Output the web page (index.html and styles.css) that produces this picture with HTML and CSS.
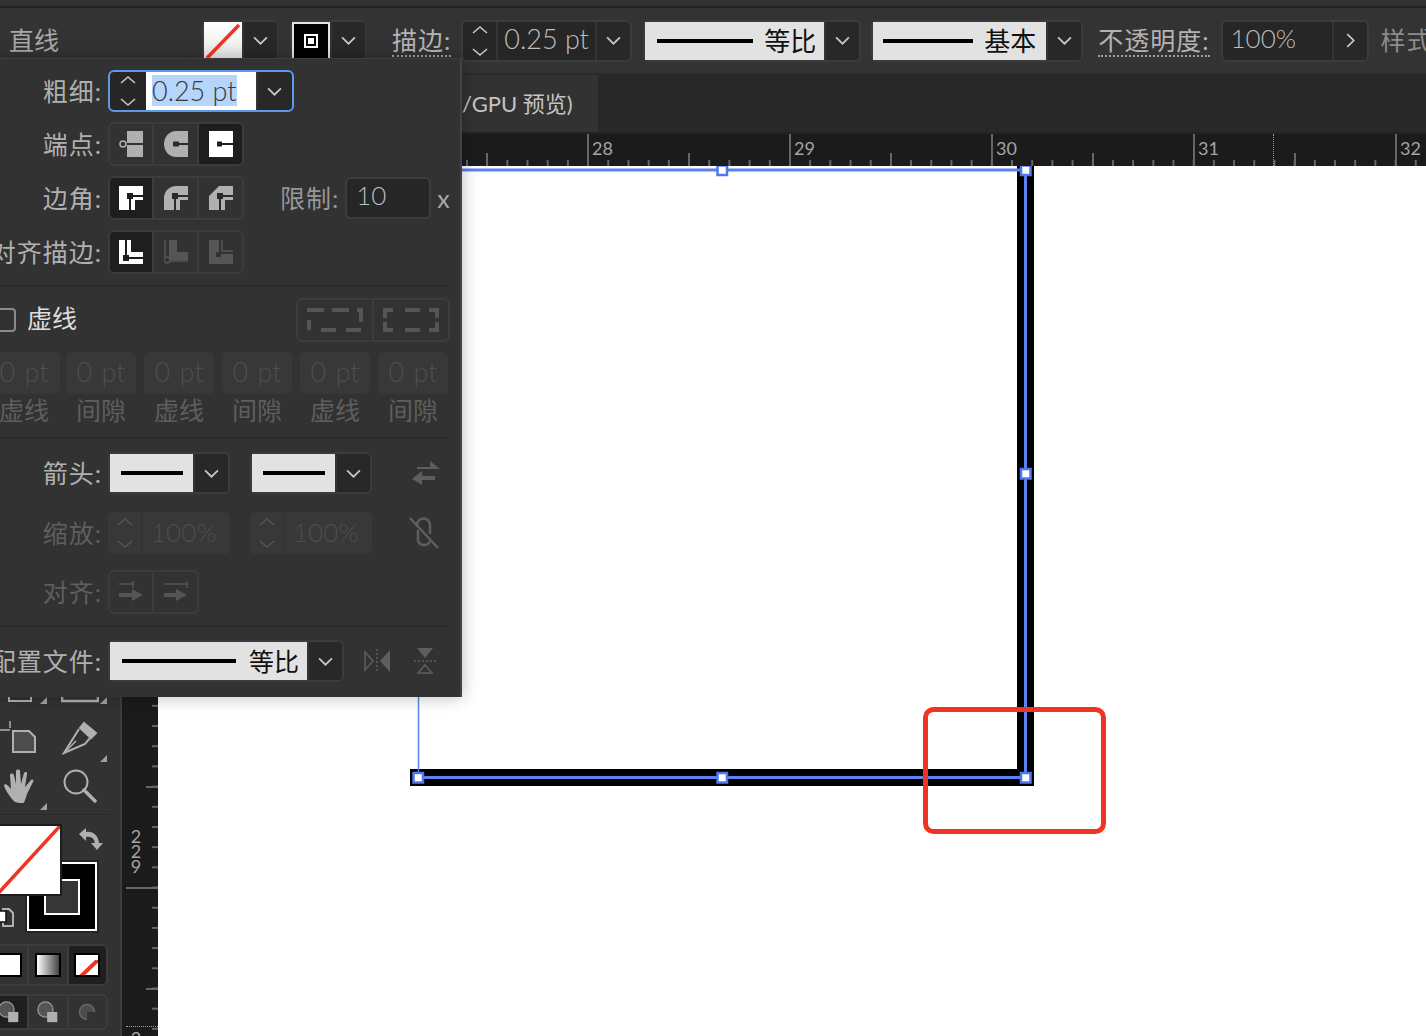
FILE: index.html
```html
<!DOCTYPE html>
<html lang="zh-CN">
<head>
    <meta charset="UTF-8">
    <title>直线 - 描边面板</title>
    <link rel="stylesheet" href="styles.css">
</head>
<body>

<svg class="sprite" xmlns="http://www.w3.org/2000/svg">
    <symbol id="chev" viewBox="0 0 14 8"><path d="M1 1l6 6 6-6" fill="none" stroke="currentColor" stroke-width="1.6"/></symbol>
    <symbol id="updown" viewBox="0 0 16 32"><path d="M1 8l7-6 7 6M1 24l7 6 7-6" fill="none" stroke="currentColor" stroke-width="1.6"/></symbol>
    <symbol id="cap-butt" viewBox="0 0 24 26"><path d="M8 0h16v26H8z" fill="currentColor"/><path d="M6 13h18" stroke="#333" stroke-width="2"/><circle cx="4" cy="13" r="3" fill="#333" stroke="currentColor" stroke-width="1.5"/></symbol>
    <symbol id="cap-round" viewBox="0 0 24 26"><path d="M12 0h12v26H12A12 13 0 0 1 12 0z" fill="currentColor"/><path d="M9 10.500h6v5H9z" fill="#2a2a2a"/><path d="M12 13h12" stroke="#2a2a2a" stroke-width="2"/></symbol>
    <symbol id="cap-square" viewBox="0 0 24 26"><path d="M0 0h24v26H0z" fill="currentColor"/><path d="M8 10.500h5v5H8z" fill="#1e1e1e"/><path d="M10 13h14" stroke="#1e1e1e" stroke-width="2"/></symbol>
    <symbol id="join-miter" viewBox="0 0 24 24"><path d="M0 0h24v14h-8v10H0z" fill="currentColor"/><path d="M8 7h6v6H8z" fill="#1e1e1e"/><path d="M11 10h13M11 10v14" stroke="#1e1e1e" stroke-width="2"/></symbol>
    <symbol id="join-round" viewBox="0 0 24 24"><path d="M12 0h12v14h-8v10H0V12A12 12 0 0 1 12 0z" fill="currentColor"/><path d="M8 7h6v6H8z" fill="#2a2a2a"/><path d="M11 10h13M11 10v14" stroke="#2a2a2a" stroke-width="2"/></symbol>
    <symbol id="join-bevel" viewBox="0 0 24 24"><path d="M10 0h14v14h-8v10H0V10z" fill="currentColor"/><path d="M8 7h6v6H8z" fill="#2a2a2a"/><path d="M11 10h13M11 10v14" stroke="#2a2a2a" stroke-width="2"/></symbol>
    <symbol id="align-center" viewBox="0 0 24 24"><path d="M0 0h12v12h12v12H0z" fill="currentColor"/><path d="M4 15h6v6H4z" fill="#1e1e1e"/><path d="M7 0v18h17" fill="none" stroke="#1e1e1e" stroke-width="2"/></symbol>
    <symbol id="align-inside" viewBox="0 0 24 24"><path d="M5 0h8v12h11v8H5z" fill="currentColor"/><path d="M1 0v21h23" fill="none" stroke="currentColor" stroke-width="1.500"/><circle cx="3" cy="20" r="3" fill="#333" stroke="currentColor" stroke-width="1.500"/></symbol>
    <symbol id="align-outside" viewBox="0 0 24 24"><path d="M0 0h10v14h14v10H0z" fill="currentColor"/><path d="M13 0v11h11" fill="none" stroke="currentColor" stroke-width="1.500"/><path d="M7 12h5v5H7z" fill="#333"/></symbol>
    <symbol id="dash-exact" viewBox="0 0 56 24"><path d="M0 2h17M25 2h17M50 2h4v12M2 12v10M14 22h15M39 22h15" fill="none" stroke="currentColor" stroke-width="4"/></symbol>
    <symbol id="dash-adjust" viewBox="0 0 56 24"><path d="M10 2H2v8M2 14v8h8M22 2h15M22 22h15M46 2h8v8M54 14v8h-8" fill="none" stroke="currentColor" stroke-width="4"/></symbol>
    <symbol id="swap" viewBox="0 0 28 24"><path d="M5 6h13V0l10 8H5zM23 15H10v-5L0 18l10 6v-5h13z" fill="currentColor"/></symbol>
    <symbol id="unlink" viewBox="0 0 30 32"><path d="M8 10V8a6.500 6.500 0 0 1 13 0v9M21 24a6.500 6.500 0 0 1-12 0V13" fill="none" stroke="currentColor" stroke-width="2.500"/><path d="M1 1l28 30" stroke="currentColor" stroke-width="2.500"/></symbol>
    <symbol id="tip-end" viewBox="0 0 24 22"><path d="M0 3h14M14 0v7" fill="none" stroke="currentColor" stroke-width="1.500"/><path d="M0 12h13V8l11 6-11 6v-4H0z" fill="currentColor"/></symbol>
    <symbol id="tip-start" viewBox="0 0 24 22"><path d="M0 3h24M23 0v7" fill="none" stroke="currentColor" stroke-width="1.500"/><path d="M0 12h12V8l11 6-11 6v-4H0z" fill="currentColor"/></symbol>
    <symbol id="flip-h" viewBox="0 0 26 24"><path d="M1 3l8 9-8 9z" fill="none" stroke="currentColor" stroke-width="1.500"/><path d="M13 0v24" stroke="currentColor" stroke-width="1.500" stroke-dasharray="2 2"/><path d="M26 1v22l-10-11z" fill="currentColor"/></symbol>
    <symbol id="flip-v" viewBox="0 0 22 26"><path d="M3 0h16l-8 10z" fill="currentColor"/><path d="M0 13h22" stroke="currentColor" stroke-width="1.500" stroke-dasharray="2 2"/><path d="M4 25l7-8 7 8z" fill="none" stroke="currentColor" stroke-width="1.500"/></symbol>
    <symbol id="flyout" viewBox="0 0 7 7"><path d="M7 0v7H0z" fill="currentColor"/></symbol>
</svg>

<div class="app">
    <div class="top-strip"></div>

    <div class="control-bar">
        <div class="doc-kind">直线</div>

        <div class="ctl swatch-ctl">
            <svg class="swatch-fill" width="38" height="38" viewBox="0 0 38 38"><path d="M3 36L35 3" stroke="#ee3524" stroke-width="3.500"/></svg>
            <div class="chev-cell"><svg class="chev"><use href="#chev"/></svg></div>
        </div>
        <div class="ctl swatch-ctl stroke-ctl">
            <div class="swatch-stroke"><span class="swatch-hole"></span></div>
            <div class="chev-cell"><svg class="chev"><use href="#chev"/></svg></div>
        </div>

        <div class="bar-label dotted stroke-label">描边:</div>
        <div class="ctl spinner">
            <div class="updown-cell"><svg class="updown"><use href="#updown"/></svg></div>
            <div class="value">0.25 pt</div>
            <div class="chev-cell"><svg class="chev"><use href="#chev"/></svg></div>
        </div>

        <div class="ctl picker profile-picker">
            <div class="picker-face">
                <span class="picker-line"></span>
                <span class="picker-name">等比</span>
            </div>
            <div class="chev-cell"><svg class="chev"><use href="#chev"/></svg></div>
        </div>
        <div class="ctl picker brush-picker">
            <div class="picker-face">
                <span class="picker-line"></span>
                <span class="picker-name">基本</span>
            </div>
            <div class="chev-cell"><svg class="chev"><use href="#chev"/></svg></div>
        </div>

        <div class="bar-label dotted opacity-label">不透明度:</div>
        <div class="ctl opacity-field">
            <div class="value">100%</div>
            <div class="chev-cell"><svg class="chev chev-right"><use href="#chev"/></svg></div>
        </div>
        <div class="bar-label style-label">样式</div>
    </div>

    <div class="work">
        <div class="tools">
            <div class="tool-grid">
                <div class="tool peek">
                    <svg width="30" height="12" viewBox="0 0 30 12"><path d="M4 0v9h22V0" fill="none" stroke="#b0b0b0" stroke-width="2"/><path d="M11 0h8v4h-8z" fill="#b0b0b0"/></svg>
                    <svg class="flyout"><use href="#flyout"/></svg>
                </div>
                <div class="tool peek">
                    <svg width="38" height="12" viewBox="0 0 38 12"><path d="M1 0v9h36V0M10 0v5M19 0v5M28 0v5" fill="none" stroke="#b0b0b0" stroke-width="2.500"/></svg>
                    <svg class="flyout"><use href="#flyout"/></svg>
                </div>
                <div class="tool">
                    <svg width="40" height="34" viewBox="0 0 40 34"><path d="M0 9h10M10 0v7" stroke="#b0b0b0" stroke-width="1.500"/><path d="M13 10h16l6 6v15H13z" fill="#4d4d4d" stroke="#b0b0b0" stroke-width="2"/></svg>
                </div>
                <div class="tool">
                    <svg width="36" height="36" viewBox="0 0 36 36"><path d="M22 3l12 10-5 5-11-10zM17 9L2 33l21-9 5-6" fill="none" stroke="#b0b0b0" stroke-width="2"/><path d="M22 3l12 10-5 5-11-10z" fill="#b0b0b0"/><path d="M2 33l12-12" stroke="#b0b0b0" stroke-width="1.500"/></svg>
                    <svg class="flyout"><use href="#flyout"/></svg>
                </div>
                <div class="tool">
                    <svg width="34" height="34" viewBox="0 0 34 34"><path d="M12 33C8 30 1 19 1 16c1-2 4 0 7 4L7 6c0-2 3-2 4 0l2 9V2c0-2 4-2 4 0l1 13 3-11c1-2 4-1 3 1l-2 13 6-7c2-1 3 0 2 2l-6 12c-1 4-2 7-4 10z" fill="#b0b0b0"/></svg>
                    <svg class="flyout"><use href="#flyout"/></svg>
                </div>
                <div class="tool">
                    <svg width="34" height="34" viewBox="0 0 34 34"><circle cx="13" cy="13" r="11.500" fill="none" stroke="#b0b0b0" stroke-width="2"/><path d="M21 21l11 11" stroke="#b0b0b0" stroke-width="3.500" stroke-linecap="round"/></svg>
                </div>
            </div>

            <div class="tools-sep"></div>

            <div class="fill-stroke">
                <div class="big-stroke"><span class="big-stroke-hole"></span></div>
                <div class="big-fill">
                    <svg width="80" height="70" viewBox="0 0 80 70"><path d="M0 85L78 0" stroke="#ee3524" stroke-width="3.500"/></svg>
                </div>
                <svg class="swap-colors" width="24" height="24" viewBox="0 0 24 24"><path d="M0 7l7-6v4c7-1 12 3 13 11h4l-6 7-6-7h4c-1-5-4-7-9-6v4z" fill="#b0b0b0"/></svg>
                <svg class="default-colors" width="16" height="26" viewBox="0 0 16 26"><path d="M4 4h6l4 4v13H4z" fill="none" stroke="#b0b0b0" stroke-width="2"/><path d="M0 6h7v11H0z" fill="#fff" stroke="#111" stroke-width="1.500"/></svg>
            </div>

            <div class="mini-group color-modes">
                <div class="mini-cell"><span class="mini-swatch mode-color"></span></div>
                <div class="mini-cell"><span class="mini-swatch mode-gradient"></span></div>
                <div class="mini-cell is-on">
                    <span class="mini-swatch"><svg width="22" height="20" viewBox="0 0 22 20"><path d="M0 21L23-1" stroke="#ee3524" stroke-width="4"/></svg></span>
                </div>
            </div>

            <div class="mini-group draw-modes">
                <div class="mini-cell is-on">
                    <svg width="22" height="22" viewBox="0 0 26 26"><circle cx="10" cy="10" r="9" fill="#555" stroke="#999" stroke-width="1.500"/><path d="M12 13h12v12H12z" fill="#b0b0b0"/></svg>
                </div>
                <div class="mini-cell">
                    <svg width="22" height="22" viewBox="0 0 26 26"><circle cx="10" cy="10" r="9" fill="#555" stroke="#999" stroke-width="1.500"/><path d="M12 13h12v12H12z" fill="#b0b0b0"/></svg>
                </div>
                <div class="mini-cell">
                    <svg width="18" height="18" viewBox="0 0 18 18"><circle cx="9" cy="9" r="7.500" fill="#4d4d4d" stroke="#666" stroke-width="1.500"/><path d="M9 9h8v8H9z" fill="#333"/></svg>
                </div>
            </div>
        </div>

        <div class="doc">
            <div class="tab-bar">
                <div class="tab">/GPU 预览)</div>
            </div>

            <div class="h-ruler">
                <span class="h-num">28</span>
                <span class="h-num">29</span>
                <span class="h-num">30</span>
                <span class="h-num">31</span>
                <span class="h-num">32</span>
                <span class="h-cursor"></span>
            </div>

            <div class="stage">
                <div class="v-ruler">
                    <div class="v-num">229</div>
                    <div class="v-num">230</div>
                    <span class="v-cursor"></span>
                </div>
                <div class="canvas">
                    <!-- viewBox uses window coordinates so the artwork reads like the screenshot -->
                    <svg class="artwork" width="1268" height="870" viewBox="158 166 1268 870">
                        <path d="M1025.500 160V777.500H410" fill="none" stroke="#000" stroke-width="17"/>
                        <path d="M418.500 170V778" fill="none" stroke="#5b82f0" stroke-width="1.500"/>
                        <path d="M418 170H1025.500V777.500H418" fill="none" stroke="#5b82f0" stroke-width="3"/>
                        <g fill="#fff" stroke="#4f78f0" stroke-width="2.500">
                            <rect x="717.500" y="165.500" width="9.500" height="9.500"/>
                            <rect x="1021" y="165.500" width="9.500" height="9.500"/>
                            <rect x="1021" y="469" width="9.500" height="9.500"/>
                            <rect x="717.500" y="773" width="9.500" height="9.500"/>
                            <rect x="413.500" y="773" width="9.500" height="9.500"/>
                            <rect x="1021" y="773" width="9.500" height="9.500"/>
                        </g>
                        <rect x="925.500" y="709.500" width="178" height="122" rx="8" fill="none" stroke="#ee3524" stroke-width="5"/>
                    </svg>
                </div>
            </div>
        </div>
    </div>

    <div class="stroke-panel">
        <div class="row row-weight">
            <div class="label"><span>粗细:</span></div>
            <div class="ctl weight-field">
                <div class="updown-cell"><svg class="updown"><use href="#updown"/></svg></div>
                <div class="value"><span class="selected-text">0.25 pt</span></div>
                <div class="chev-cell"><svg class="chev"><use href="#chev"/></svg></div>
            </div>
        </div>

        <div class="row">
            <div class="label"><span>端点:</span></div>
            <div class="btn-group">
                <div class="btn"><svg class="icon-cap"><use href="#cap-butt"/></svg></div>
                <div class="btn"><svg class="icon-cap"><use href="#cap-round"/></svg></div>
                <div class="btn is-on"><svg class="icon-cap"><use href="#cap-square"/></svg></div>
            </div>
        </div>

        <div class="row">
            <div class="label"><span>边角:</span></div>
            <div class="btn-group">
                <div class="btn is-on"><svg class="icon-sq"><use href="#join-miter"/></svg></div>
                <div class="btn"><svg class="icon-sq"><use href="#join-round"/></svg></div>
                <div class="btn"><svg class="icon-sq"><use href="#join-bevel"/></svg></div>
            </div>
            <div class="limit-label">限制:</div>
            <div class="ctl limit-field"><div class="value">10</div></div>
            <div class="limit-x">x</div>
        </div>

        <div class="row">
            <div class="label"><span>对齐描边:</span></div>
            <div class="btn-group">
                <div class="btn is-on"><svg class="icon-sq"><use href="#align-center"/></svg></div>
                <div class="btn is-dim"><svg class="icon-sq"><use href="#align-inside"/></svg></div>
                <div class="btn is-dim"><svg class="icon-sq"><use href="#align-outside"/></svg></div>
            </div>
        </div>

        <div class="panel-sep"></div>

        <div class="row dash-row">
            <span class="checkbox"></span>
            <span class="dash-title">虚线</span>
            <div class="btn-group dash-modes">
                <div class="btn is-dim"><svg class="icon-dash"><use href="#dash-exact"/></svg></div>
                <div class="btn is-dim"><svg class="icon-dash"><use href="#dash-adjust"/></svg></div>
            </div>
        </div>

        <div class="dash-grid">
            <div class="dash-field dash-first">0 pt</div>
            <div class="dash-field">0 pt</div>
            <div class="dash-field">0 pt</div>
            <div class="dash-field">0 pt</div>
            <div class="dash-field">0 pt</div>
            <div class="dash-field">0 pt</div>
            <div class="dash-name dash-first">虚线</div>
            <div class="dash-name">间隙</div>
            <div class="dash-name">虚线</div>
            <div class="dash-name">间隙</div>
            <div class="dash-name">虚线</div>
            <div class="dash-name">间隙</div>
        </div>

        <div class="panel-sep sep-arrows"></div>

        <div class="row row-arrows">
            <div class="label"><span>箭头:</span></div>
            <div class="ctl arrow-picker">
                <div class="picker-face"><span class="picker-line"></span></div>
                <div class="chev-cell"><svg class="chev"><use href="#chev"/></svg></div>
            </div>
            <div class="ctl arrow-picker second">
                <div class="picker-face"><span class="picker-line"></span></div>
                <div class="chev-cell"><svg class="chev"><use href="#chev"/></svg></div>
            </div>
            <svg class="side-icon swap-icon"><use href="#swap"/></svg>
        </div>

        <div class="row row-scale">
            <div class="label is-dim"><span>缩放:</span></div>
            <div class="scale-field">
                <div class="updown-cell"><svg class="updown"><use href="#updown"/></svg></div>
                <div class="scale-value">100%</div>
            </div>
            <div class="scale-field second">
                <div class="updown-cell"><svg class="updown"><use href="#updown"/></svg></div>
                <div class="scale-value">100%</div>
            </div>
            <svg class="side-icon unlink-icon"><use href="#unlink"/></svg>
        </div>

        <div class="row row-tips">
            <div class="label is-dim"><span>对齐:</span></div>
            <div class="btn-group">
                <div class="btn is-dim"><svg class="icon-tip"><use href="#tip-end"/></svg></div>
                <div class="btn is-dim"><svg class="icon-tip"><use href="#tip-start"/></svg></div>
            </div>
        </div>

        <div class="panel-sep"></div>

        <div class="row row-profile">
            <div class="label"><span>配置文件:</span></div>
            <div class="ctl panel-profile">
                <div class="picker-face">
                    <span class="picker-line"></span>
                    <span class="picker-name">等比</span>
                </div>
                <div class="chev-cell"><svg class="chev"><use href="#chev"/></svg></div>
            </div>
            <svg class="flip-h"><use href="#flip-h"/></svg>
            <svg class="flip-v"><use href="#flip-v"/></svg>
        </div>
    </div>
</div>

</body>
</html>
```

FILE: styles.css
```css
* {
    box-sizing: border-box;
}
html, body {
    margin: 0;
    height: 100%;
    overflow: hidden;
}
body {
    font-family: Lato, "Noto Sans CJK SC", sans-serif;
    font-size: 25px;
    color: #b4b4b4;
    background-color: #323232;
}
.sprite {
    display: none;
}
.app {
    position: relative;
    width: 1426px;
    height: 1036px;
    display: flex;
    flex-direction: column;
    overflow: hidden;
}
.top-strip {
    height: 8px;
    background-color: #323232;
    border-bottom: 2px solid #222;
}

/* control bar */
.control-bar {
    height: 67px;
    flex: none;
    display: flex;
    align-items: center;
    white-space: nowrap;
    background-color: #333;
    border-bottom: 2px solid #2a2a2a;
}
.doc-kind {
    width: 190px;
    height: 50px;
    flex: none;
    line-height: 48px;
    padding-left: 9px;
    margin-right: 12px;
    color: #a8a8a8;
    border-right: 1px solid #2e2e2e;
}
.ctl {
    display: flex;
    flex: none;
    height: 42px;
    border: 2px solid #3c3c3c;
    border-radius: 6px;
    background-color: #262626;
    overflow: hidden;
    font-weight: 300;
}
/* the light faces keep square corners inside the rounded frame */
.swatch-ctl,
.profile-picker,
.brush-picker,
.arrow-picker,
.panel-profile {
    overflow: visible;
}
.chev-cell {
    width: 35px;
    flex: none;
    display: flex;
    align-items: center;
    justify-content: center;
    background-color: #282828;
    border-left: 2px solid #343434;
    border-radius: 0 4px 4px 0;
}
.chev {
    width: 15px;
    height: 9px;
    color: #c8c8c8;
}
.chev-right {
    transform: rotate(-90deg);
}
.updown-cell {
    width: 35px;
    flex: none;
    display: flex;
    align-items: center;
    justify-content: center;
}
.updown {
    width: 16px;
    height: 32px;
    color: #c8c8c8;
}
.value {
    flex: 1;
    line-height: 33px;
    font-size: 27px;
    color: #bdbdbd;
    padding-left: 6px;
}
.swatch-ctl {
    width: 76px;
}
.stroke-ctl {
    margin-left: 12px;
}
.swatch-fill {
    flex: none;
    background: linear-gradient(#fff, #e8e8e8);
}
.swatch-stroke {
    width: 38px;
    flex: none;
    display: flex;
    align-items: center;
    justify-content: center;
    background-color: #000;
    border: 2px solid #e4e4e4;
}
.swatch-hole {
    width: 14px;
    height: 14px;
    background-color: #fff;
    border: 2px solid #fff;
    box-shadow: inset 0 0 0 2px #000;
}
.bar-label {
    height: 32px;
    line-height: 30px;
    flex: none;
    letter-spacing: 1px;
}
.dotted {
    border-bottom: 2px dotted #a0a0a0;
}
.stroke-label {
    margin: 0 10px 0 26px;
}
.spinner {
    width: 171px;
}
.spinner .updown-cell {
    border-right: 2px solid #343434;
}
.picker-face {
    flex: 1;
    display: flex;
    align-items: center;
    justify-content: space-between;
    background-color: #e2e2e2;
    color: #111;
    font-weight: 400;
}
.picker-line {
    height: 4px;
    background-color: #000;
}
.picker-name {
    line-height: 30px;
    font-size: 26px;
}
.profile-picker {
    width: 218px;
    margin-left: 11px;
}
.profile-picker .picker-face {
    padding: 0 8px 0 12px;
}
.profile-picker .picker-line {
    width: 96px;
}
.brush-picker {
    width: 212px;
    margin-left: 10px;
}
.brush-picker .picker-face {
    padding: 0 10px 0 10px;
}
.brush-picker .picker-line {
    width: 90px;
}
.opacity-label {
    margin: 0 11px 0 15px;
}
.opacity-field {
    width: 148px;
}
.opacity-field .value {
    padding-left: 8px;
    font-size: 26px;
}
.style-label {
    margin-left: 12px;
    color: #8c8c8c;
}

/* work area */
.work {
    flex: 1;
    display: flex;
    min-height: 0;
}
.tools {
    width: 122px;
    flex: none;
    display: flex;
    flex-direction: column;
    justify-content: flex-end;
    padding-bottom: 6px;
    background-color: #323232;
    border-right: 2px solid #3d3d3d;
}
.tool-grid {
    display: grid;
    grid-template-columns: 60px 60px;
    grid-auto-rows: 48px;
    margin-left: -10px;
}
.tool {
    position: relative;
    display: flex;
    align-items: center;
    justify-content: center;
}
.tool.peek {
    align-items: flex-end;
    height: 36px;
    align-self: end;
    margin-bottom: 10px;
}
.flyout {
    position: absolute;
    right: 3px;
    bottom: 0;
    width: 7px;
    height: 7px;
    color: #a0a0a0;
}
.tools-sep {
    height: 1px;
    width: 110px;
    margin-top: 4px;
    background-color: #272727;
}
.fill-stroke {
    position: relative;
    height: 129px;
}
.big-stroke {
    position: absolute;
    left: 27px;
    top: 47px;
    width: 70px;
    height: 69px;
    background-color: #000;
    border: 2px solid #fff;
    outline: 2px solid #242424;
    display: flex;
    align-items: center;
    justify-content: center;
}
.big-stroke-hole {
    width: 36px;
    height: 36px;
    background-color: #363636;
    border: 2px solid #fff;
}
.big-fill {
    position: absolute;
    left: -20px;
    top: 9px;
    width: 82px;
    height: 72px;
    background-color: #fff;
    border: 2px solid #1d1d1d;
    overflow: hidden;
}
.swap-colors {
    position: absolute;
    left: 79px;
    top: 12px;
}
.default-colors {
    position: absolute;
    left: -1px;
    top: 90px;
}
.mini-group {
    display: flex;
    width: 120px;
    margin-left: -12px;
    border: 2px solid #3c3c3c;
    border-radius: 6px;
    overflow: hidden;
}
.mini-cell {
    flex: 1;
    display: flex;
    align-items: center;
    justify-content: center;
    border-left: 2px solid #3c3c3c;
}
.mini-cell:first-child {
    border-left: 0;
}
.mini-cell.is-on {
    background-color: #1f1f1f;
}
.color-modes {
    height: 42px;
}
.draw-modes {
    height: 36px;
    margin-top: 8px;
}
.mini-swatch {
    width: 26px;
    height: 24px;
    display: block;
    background-color: #fff;
    border: 2px solid #000;
    overflow: hidden;
}
.mode-gradient {
    background: linear-gradient(90deg, #fff, #444);
}
.doc {
    flex: 1;
    min-width: 0;
    display: flex;
    flex-direction: column;
}
.tab-bar {
    height: 59px;
    flex: none;
    background-color: #282828;
    border-bottom: 2px solid #222;
    display: flex;
}
.tab {
    width: 476px;
    padding-left: 340px;
    line-height: 57px;
    font-size: 22px;
    color: #c4c4c4;
    background-color: #323232;
}

/* rulers */
.h-ruler {
    position: relative;
    height: 32px;
    flex: none;
    padding-left: 465px;
    display: flex;
    background-color: #1b1b1b;
    background-image:
        linear-gradient(90deg, #666 2px, transparent 2px),
        linear-gradient(90deg, #666 2px, transparent 2px),
        linear-gradient(90deg, #666 2px, transparent 2px);
    background-size: 202px 100%, 202px 13px, 20.2px 6px;
    background-position: 61px 0, 162px 100%, 0.8px 100%;
    background-repeat: repeat-x;
}
.h-num {
    width: 202px;
    flex: none;
    padding-left: 5px;
    font-size: 18px;
    line-height: 29px;
    color: #a4a4a4;
}
.h-cursor {
    position: absolute;
    left: 1151px;
    top: 0;
    height: 32px;
    border-left: 1px dotted #999;
}
.stage {
    flex: 1;
    display: flex;
    min-height: 0;
}
.v-ruler {
    position: relative;
    width: 36px;
    flex: none;
    padding-top: 659px;
    overflow: hidden;
    background-color: #1b1b1b;
    background-image:
        linear-gradient(#666 2px, transparent 2px),
        linear-gradient(#666 2px, transparent 2px),
        linear-gradient(#666 2px, transparent 2px);
    background-size: 32px 202px, 12px 202px, 6px 20.2px;
    background-position: 100% 115px, 100% 14px, 100% 14px;
    background-repeat: repeat-y;
}
.v-num {
    height: 202px;
    padding-left: 4px;
    writing-mode: vertical-lr;
    text-orientation: upright;
    font-size: 18px;
    line-height: 20px;
    letter-spacing: -7px;
    color: #a4a4a4;
}
.v-cursor {
    position: absolute;
    left: 4px;
    right: 0;
    top: 860px;
    border-top: 1px dotted #999;
}
.canvas {
    position: relative;
    flex: 1;
    background-color: #fff;
}
.artwork {
    position: absolute;
    left: 0;
    top: 0;
    display: block;
}

/* stroke panel */
.stroke-panel {
    position: absolute;
    left: 0;
    top: 58px;
    width: 462px;
    height: 639px;
    padding: 11px 10px 0 0;
    background-color: #323232;
    border-top: 1px solid #3e3e3e;
    border-right: 2px solid #434343;
    box-shadow: 0 0 16px rgba(0, 0, 0, 0.28);
    overflow: hidden;
}
.row {
    display: flex;
    align-items: center;
    height: 44px;
    margin-top: 10px;
    white-space: nowrap;
}
.row-weight {
    height: 42px;
    margin-top: 0;
}
.label {
    width: 102px;
    flex: none;
    margin-right: 6px;
    padding-bottom: 3px;
    display: flex;
    justify-content: flex-end;
    letter-spacing: 1px;
    color: #b0b0b0;
}
.label.is-dim {
    color: #5e5e5e;
}
.weight-field {
    width: 186px;
    border-color: #5b9ae8;
}
.weight-field .updown-cell {
    width: 36px;
}
.weight-field .value {
    flex: none;
    width: 110px;
    padding-left: 6px;
    background-color: #fff;
    color: #3a3a3a;
    line-height: 38px;
}
.selected-text {
    background-color: #b5d5fb;
    display: inline-block;
    line-height: 31px;
}
.btn-group {
    display: flex;
    flex: none;
    height: 44px;
    border: 2px solid #3c3c3c;
    border-radius: 6px;
    overflow: hidden;
}
.btn {
    width: 45px;
    flex: none;
    display: flex;
    align-items: center;
    justify-content: center;
    color: #b0b0b0;
    border-left: 2px solid #3c3c3c;
}
.btn:first-child {
    width: 42px;
    border-left: 0;
}
.btn.is-on {
    background-color: #1e1e1e;
    color: #fff;
}
.btn.is-dim {
    color: #555;
}
.icon-cap {
    width: 24px;
    height: 26px;
}
.icon-sq {
    width: 24px;
    height: 24px;
}
.icon-dash {
    width: 56px;
    height: 24px;
}
.icon-tip {
    width: 24px;
    height: 22px;
}
.limit-label {
    margin: 0 6px 0 36px;
    padding-bottom: 3px;
    letter-spacing: 1px;
    color: #969696;
}
.limit-field {
    width: 86px;
    height: 42px;
}
.limit-field .value {
    padding-left: 9px;
    font-size: 26px;
}
.limit-x {
    margin-left: 6px;
    color: #a8a8a8;
}
.panel-sep {
    height: 2px;
    margin-top: 11px;
    background-color: #2b2b2b;
}
.dash-row {
    margin-top: 11px;
}
.checkbox {
    width: 24px;
    height: 24px;
    flex: none;
    margin-left: -8px;
    border: 2px solid #8a8a8a;
    border-radius: 4px;
}
.dash-title {
    margin-left: 11px;
    padding-bottom: 6px;
    color: #dedede;
}
.dash-modes {
    margin-left: auto;
}
.dash-modes .btn {
    width: 76px;
}
.dash-modes .btn:first-child {
    width: 74px;
}
.dash-grid {
    display: grid;
    grid-template-columns: repeat(6, 70px);
    column-gap: 8px;
    grid-template-rows: 42px 32px;
    margin: 10px 0 0 -12px;
}
.dash-field {
    border-radius: 5px;
    background-color: #383838;
    color: #4e4e4e;
    font-size: 27px;
    font-weight: 300;
    line-height: 40px;
    word-spacing: 2px;
    text-align: center;
}
.dash-first {
    margin-right: -2px;
}
.dash-name {
    color: #5e5e5e;
    text-align: center;
    line-height: 32px;
}
.sep-arrows {
    margin-top: 11px;
}
.row-arrows {
    height: 42px;
    margin-top: 13px;
}
.arrow-picker {
    width: 122px;
    height: 42px;
}
.arrow-picker .picker-face {
    justify-content: center;
}
.arrow-picker .picker-line {
    width: 62px;
}
.arrow-picker.second,
.scale-field.second {
    margin-left: 20px;
}
.side-icon {
    flex: none;
}
.swap-icon {
    width: 28px;
    height: 24px;
    margin-left: 40px;
    color: #5e5e5e;
}
.row-scale {
    height: 42px;
    margin-top: 18px;
}
.scale-field {
    display: flex;
    width: 122px;
    height: 42px;
    flex: none;
    border-radius: 5px;
    background-color: #383838;
}
.scale-field .updown {
    color: #555;
}
.scale-field .updown-cell {
    border-right: 2px solid #333;
}
.scale-value {
    padding-left: 8px;
    font-size: 26px;
    font-weight: 300;
    line-height: 40px;
    color: #4e4e4e;
}
.unlink-icon {
    width: 30px;
    height: 32px;
    margin-left: 37px;
    color: #5e5e5e;
}
.row-tips {
    margin-top: 16px;
}
.row-profile {
    height: 42px;
    margin-top: 13px;
}
.panel-profile {
    width: 236px;
}
.panel-profile .picker-face {
    padding: 0 8px 0 12px;
}
.panel-profile .picker-name {
    font-size: 25px;
}
.panel-profile .picker-line {
    width: 114px;
}
.flip-h {
    width: 26px;
    height: 24px;
    margin-left: 20px;
    flex: none;
    color: #5e5e5e;
}
.flip-v {
    width: 22px;
    height: 26px;
    margin-left: 24px;
    flex: none;
    color: #5e5e5e;
}
```
